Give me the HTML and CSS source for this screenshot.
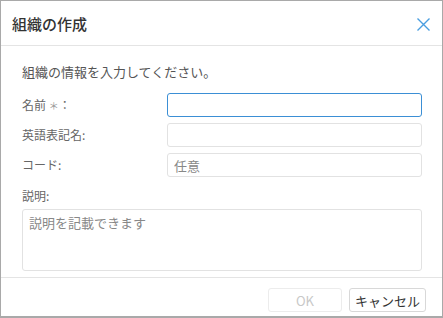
FILE: index.html
```html
<!DOCTYPE html>
<html lang="ja">
<head>
    <meta charset="UTF-8">
    <title>組織の作成</title>
    <link rel="stylesheet" href="styles.css">
</head>
<body>
    <!-- Dialog -->
    <div class="dialog">
        <div class="dialog-header">
            <h1 class="dialog-title">組織の作成</h1>
            <button class="close-btn" aria-label="閉じる">
                <svg width="13" height="13" viewBox="0 0 13 13">
                    <path d="M0.5 0.5 L12.5 12.5 M12.5 0.5 L0.5 12.5" stroke="#4a9ee0" stroke-width="1.4" fill="none"/>
                </svg>
            </button>
        </div>

        <div class="dialog-body">
            <p class="intro">組織の情報を入力してください。</p>

            <div class="form-row">
                <label class="field-label">名前 <span class="req">＊</span>：</label>
                <input type="text" class="field-input focused">
            </div>
            <div class="form-row">
                <label class="field-label">英語表記名:</label>
                <input type="text" class="field-input">
            </div>
            <div class="form-row">
                <label class="field-label">コード:</label>
                <input type="text" class="field-input" placeholder="任意">
            </div>

            <label class="field-label desc-label">説明:</label>
            <textarea class="field-textarea" placeholder="説明を記載できます"></textarea>
        </div>

        <div class="dialog-footer">
            <button class="btn btn-ok" disabled>OK</button>
            <button class="btn btn-cancel">キャンセル</button>
        </div>
    </div>
</body>
</html>
```

FILE: styles.css
```css
/* Page */
body {
    margin: 0;
    font-family: "Noto Sans CJK JP", "Noto Sans", sans-serif;
    color: #333;
    background-color: #fff;
}

/* Dialog frame */
.dialog {
    width: 443px;
    height: 318px;
    box-sizing: border-box;
    border: 1px solid #a9a9a9;
    border-bottom-width: 2px;
    display: flex;
    flex-direction: column;
}

/* Header */
.dialog-header {
    height: 44px;
    border-bottom: 1px solid #e4e4e4;
    display: flex;
    align-items: center;
    justify-content: space-between;
    padding: 0 12px 0 11px;
}

.dialog-title {
    margin: 0;
    font-size: 15px;
    font-weight: 500;
    color: #333;
}

.close-btn {
    border: none;
    background: none;
    padding: 0;
    margin-top: 2px;
    display: flex;
    cursor: pointer;
}

/* Body */
.dialog-body {
    padding: 16px 20px 6px 21px;
    display: flex;
    flex-direction: column;
}

.intro {
    margin: 0 0 11px;
    font-size: 13px;
    line-height: 20px;
    color: #555;
}

.form-row {
    display: flex;
    align-items: center;
    margin-bottom: 6px;
}

.field-label {
    width: 145px;
    font-size: 12px;
    line-height: 20px;
    color: #666;
}

.req {
    color: #999;
    font-size: 10px;
}

.field-input {
    flex: 1;
    height: 24px;
    box-sizing: border-box;
    border: 1px solid #e2e2e2;
    border-radius: 3px;
    padding: 0 6px;
    font-family: inherit;
    font-size: 13px;
    color: #333;
    outline: none;
}

.field-input.focused {
    border-color: #3b8fd5;
}

.field-input::placeholder,
.field-textarea::placeholder {
    color: #888;
}

.desc-label {
    margin-top: 3px;
    margin-bottom: 3px;
}

.field-textarea {
    height: 62px;
    box-sizing: border-box;
    border: 1px solid #e2e2e2;
    border-radius: 3px;
    padding: 3px 6px;
    font-family: inherit;
    font-size: 13px;
    resize: none;
    outline: none;
}

/* Footer */
.dialog-footer {
    border-top: 1px solid #e4e4e4;
    display: flex;
    justify-content: flex-end;
    gap: 7px;
    padding: 10px 16px 0 0;
}

.btn {
    height: 24px;
    box-sizing: border-box;
    border-radius: 3px;
    background-color: #fff;
    font-family: inherit;
    font-size: 13px;
    padding: 0;
    cursor: pointer;
}

.btn-ok {
    width: 74px;
    border: 1px solid #ececec;
    color: #c8c8c8;
}

.btn-cancel {
    width: 77px;
    border: 1px solid #d8d8d8;
    color: #333;
}
```
